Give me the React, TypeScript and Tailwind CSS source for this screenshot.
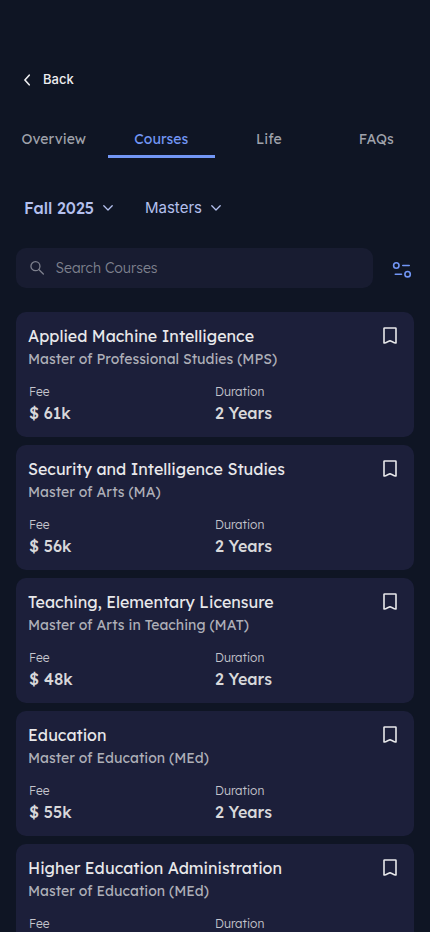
import { useState } from 'react';

const tabs = ['Overview', 'Courses', 'Life', 'FAQs'];

const courses = [
  { id: 1, name: 'Applied Machine Intelligence', degree: 'Master of Professional Studies (MPS)', fee: '$ 61k', duration: '2 Years' },
  { id: 2, name: 'Security and Intelligence Studies', degree: 'Master of Arts (MA)', fee: '$ 56k', duration: '2 Years' },
  { id: 3, name: 'Teaching, Elementary Licensure', degree: 'Master of Arts in Teaching (MAT)', fee: '$ 48k', duration: '2 Years' },
  { id: 4, name: 'Education', degree: 'Master of Education (MEd)', fee: '$ 55k', duration: '2 Years' },
  { id: 5, name: 'Higher Education Administration', degree: 'Master of Education (MEd)', fee: '$ 55k', duration: '2 Years' },
];

function ChevronDown() {
  return (
    <svg width="10" height="6" viewBox="0 0 10 6" fill="none" stroke="#b4c0ee" strokeWidth="1.3" strokeLinecap="round" strokeLinejoin="round" aria-hidden="true">
      <path d="M0.8 0.8 5 5 9.2 0.8" />
    </svg>
  );
}

function CourseCard({ course }: { course: (typeof courses)[number] }) {
  const [saved, setSaved] = useState(false);

  return (
    <li className="shrink-0 rounded-[10px] bg-[#1c1f3a] px-3 pt-3 pb-[13px]">
      <div className="flex items-start justify-between">
        <div>
          <h2 className="text-base text-[#e8e8ea]">{course.name}</h2>
          <p className="text-sm leading-[22px] text-[#aeafb8]">{course.degree}</p>
        </div>
        <button
          type="button"
          aria-label={`Save ${course.name}`}
          aria-pressed={saved}
          onClick={() => setSaved(!saved)}
          className="flex size-6 items-center justify-center"
        >
          <svg width="14" height="18" viewBox="0 0 14 18" fill={saved ? '#e8e8ea' : 'none'} stroke="#e8e8ea" strokeWidth="1.6" strokeLinejoin="round" aria-hidden="true">
            <path d="M1.500 1h11a.5.5 0 0 1 .5.5V16q-1.500.2-3-.9L7 13.800 4 15.100Q2.500 16.200 1 16V1.500a.5.5 0 0 1 .5-.5Z" />
          </svg>
        </button>
      </div>
      <dl className="mt-3 grid grid-cols-2 px-px">
        <div>
          <dt className="text-xs leading-5 font-light text-[#c4c5cc]">Fee</dt>
          <dd className="text-base leading-[22px] font-medium text-[#d8d8da]">{course.fee}</dd>
        </div>
        <div>
          <dt className="text-xs leading-5 font-light text-[#c4c5cc]">Duration</dt>
          <dd className="text-base leading-[22px] font-medium text-[#d8d8da]">{course.duration}</dd>
        </div>
      </dl>
    </li>
  );
}

export default function App() {
  const [activeTab, setActiveTab] = useState('Courses');
  const [query, setQuery] = useState('');

  const filteredCourses = courses.filter((c) => c.name.toLowerCase().includes(query.toLowerCase()));

  return (
    <div className="flex h-dvh flex-col bg-[#0f1524] font-[Lexend,Inter,sans-serif]">
      <header className="px-5 pt-16">
        <button type="button" className="flex h-8 items-center gap-3 pl-1 font-[Inter,sans-serif] text-[13px] font-medium text-[#ededf0]">
          <svg width="7" height="12" viewBox="0 0 7 12" fill="none" stroke="currentColor" strokeWidth="1.6" strokeLinecap="round" strokeLinejoin="round" aria-hidden="true">
            <path d="M5.200 1.200.900 6l4.300 4.800" />
          </svg>
          Back
        </button>
      </header>

      <nav className="mt-6 grid grid-cols-4">
        {tabs.map((tab) => (
          <button
            key={tab}
            type="button"
            onClick={() => setActiveTab(tab)}
            className={`h-[38px] border-b-3 pt-0.5 text-sm ${activeTab === tab ? 'border-[#7296f5] text-[#7296f5]' : 'border-transparent text-[#9fa2ab]'}`}
          >
            {tab}
          </button>
        ))}
      </nav>

      <div className="mt-9 flex items-center gap-8 px-6 text-[#b4c0ee]">
        <button type="button" className="flex h-7 items-center gap-[9px] text-base font-medium">
          Fall 2025
          <ChevronDown />
        </button>
        <button type="button" className="flex h-7 items-center gap-[9px] font-[Inter,sans-serif] text-[15px]">
          Masters
          <ChevronDown />
        </button>
      </div>

      <div className="mt-[26px] flex items-center gap-[17px] px-4">
        <label className="flex h-10 grow items-center gap-[10px] rounded-[10px] bg-[#181c31] px-[13px]">
          <svg width="18" height="18" viewBox="0 0 18 18" fill="none" stroke="#7e818e" strokeWidth="1.4" strokeLinecap="round" aria-hidden="true">
            <circle cx="7" cy="7" r="4.900" />
            <path d="m10.600 10.600 5 5" />
          </svg>
          <input
            type="text"
            aria-label="Search Courses"
            placeholder="Search Courses"
            value={query}
            onChange={(e) => setQuery(e.target.value)}
            className="w-full bg-transparent text-sm font-light text-[#e8e8ea] outline-none placeholder:text-[#7e818e]"
          />
        </label>
        <button type="button" aria-label="Filter courses" className="flex h-10 w-6 items-center justify-center">
          <svg width="20" height="20" viewBox="0 0 20 20" fill="none" stroke="#7296f5" strokeWidth="1.6" strokeLinecap="round" aria-hidden="true">
            <circle cx="4.300" cy="7.500" r="2.700" />
            <path d="M10.800 7.500h6.400M3.300 16.200h6.200" />
            <circle cx="15.600" cy="16.200" r="2.700" />
          </svg>
        </button>
      </div>

      <ul className="mt-6 flex min-h-0 grow flex-col gap-2 overflow-y-auto px-4 [scrollbar-width:none]">
        {filteredCourses.map((course) => (
          <CourseCard key={course.id} course={course} />
        ))}
      </ul>
    </div>
  );
}
